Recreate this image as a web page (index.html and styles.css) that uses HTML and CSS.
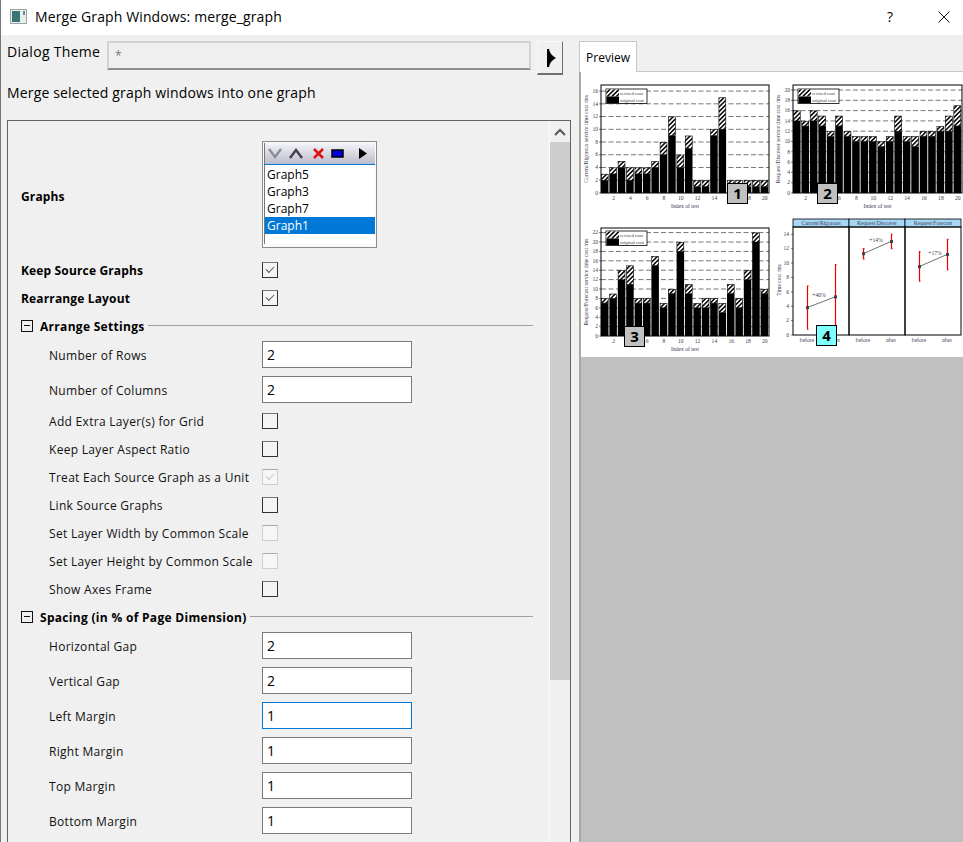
FILE: index.html
```html
<!DOCTYPE html>

<html lang="en">

	<head>
		<title>Merge Graph Windows</title>
		<link rel="stylesheet" href="styles.css">
	</head>

	<body>

		<div class="window">

			<header class="titlebar">
				<svg class="app-icon" width="17" height="15" viewBox="0 0 17 15">
					<rect x="0.5" y="0.5" width="16" height="14" fill="#e8eeee" stroke="#9aa6a6" />
					<rect x="2" y="2" width="8" height="11" fill="#3a7476" />
					<rect x="13" y="2" width="2" height="4" fill="#6a8a8c" />
				</svg>
				<span class="title-text">Merge Graph Windows: merge_graph</span>
				<span class="help">?</span>
				<svg class="close" width="12" height="12" viewBox="0 0 12 12">
					<path d="M0.5 0.5 L11.5 11.5 M11.5 0.5 L0.5 11.5" stroke="#111" fill="none" />
				</svg>
			</header>

			<main class="dialog">

				<section class="left">

					<div class="theme-row">
						<div class="theme-label">Dialog Theme</div>
						<div class="theme-field">*</div>
						<div class="theme-button">
							<svg width="9" height="18" viewBox="0 0 9 18">
								<path d="M0 0 L2 0 Q3 6 9 9 Q3 12 2 18 L0 18 Z" fill="#000" />
							</svg>
						</div>
					</div>

					<p class="description">Merge selected graph windows into one graph</p>

					<div class="panel">

						<form class="settings">

							<div class="row row-graphs">
								<div class="label strong">Graphs</div>
								<div class="listbox">
									<div class="list-tools">
										<svg width="109" height="21" viewBox="0 0 109 21">
											<path d="M4 6 L10 14 L16 6" stroke="#8d8d96" stroke-width="2.5" fill="none" />
											<path d="M25 15 L31 7 L37 15" stroke="#44444a" stroke-width="2.5" fill="none" />
											<path d="M49 6 L58 15 M58 6 L49 15" stroke="#e01010" stroke-width="2.5" fill="none" />
											<rect x="67" y="7" width="11" height="7" fill="#0000e0" stroke="#000" stroke-width="1.5" />
											<path d="M94 5 L102 10.5 L94 16 Z" fill="#000" />
										</svg>
									</div>
									<div class="list-body">
										<div class="list-item">Graph5</div>
										<div class="list-item">Graph3</div>
										<div class="list-item">Graph7</div>
										<div class="list-item selected">Graph1</div>
									</div>
								</div>
							</div>

							<div class="row row-check">
								<div class="label strong">Keep Source Graphs</div>
								<div class="check on"></div>
							</div>
							<div class="row row-check">
								<div class="label strong">Rearrange Layout</div>
								<div class="check on"></div>
							</div>

							<div class="group"><span class="toggle"></span><span class="group-title">Arrange Settings</span><span class="group-line"></span></div>

							<div class="row row-input">
								<div class="label sub">Number of Rows</div>
								<div class="input">2</div>
							</div>
							<div class="row row-input">
								<div class="label sub">Number of Columns</div>
								<div class="input">2</div>
							</div>
							<div class="row row-check">
								<div class="label sub">Add Extra Layer(s) for Grid</div>
								<div class="check"></div>
							</div>
							<div class="row row-check">
								<div class="label sub">Keep Layer Aspect Ratio</div>
								<div class="check"></div>
							</div>
							<div class="row row-check">
								<div class="label sub">Treat Each Source Graph as a Unit</div>
								<div class="check on disabled"></div>
							</div>
							<div class="row row-check">
								<div class="label sub">Link Source Graphs</div>
								<div class="check"></div>
							</div>
							<div class="row row-check">
								<div class="label sub">Set Layer Width by Common Scale</div>
								<div class="check disabled"></div>
							</div>
							<div class="row row-check">
								<div class="label sub">Set Layer Height by Common Scale</div>
								<div class="check disabled"></div>
							</div>
							<div class="row row-check">
								<div class="label sub">Show Axes Frame</div>
								<div class="check"></div>
							</div>

							<div class="group"><span class="toggle"></span><span class="group-title">Spacing (in % of Page Dimension)</span><span class="group-line"></span></div>

							<div class="row row-input">
								<div class="label sub">Horizontal Gap</div>
								<div class="input">2</div>
							</div>
							<div class="row row-input">
								<div class="label sub">Vertical Gap</div>
								<div class="input">2</div>
							</div>
							<div class="row row-input">
								<div class="label sub">Left Margin</div>
								<div class="input focus">1</div>
							</div>
							<div class="row row-input">
								<div class="label sub">Right Margin</div>
								<div class="input">1</div>
							</div>
							<div class="row row-input">
								<div class="label sub">Top Margin</div>
								<div class="input">1</div>
							</div>
							<div class="row row-input">
								<div class="label sub">Bottom Margin</div>
								<div class="input">1</div>
							</div>

						</form>

						<div class="scrollbar">
							<div class="scroll-up">
								<svg width="12" height="8" viewBox="0 0 12 8">
									<path d="M1 7 L6 2 L11 7" stroke="#555" stroke-width="2" fill="none" />
								</svg>
							</div>
							<div class="scroll-thumb"></div>
						</div>

					</div>

				</section>

				<section class="right">

					<div class="tabs">
						<div class="tab">Preview</div>
					</div>

					<div class="tab-pane">
						<div class="sheet">
							<div class="thumb"><svg id="chart1" width="191" height="142"></svg><span class="badge badge-1">1</span></div>
							<div class="thumb"><svg id="chart2" width="191" height="142"></svg><span class="badge badge-2">2</span></div>
							<div class="thumb"><svg id="chart3" width="191" height="143"></svg><span class="badge badge-3">3</span></div>
							<div class="thumb"><svg id="chart4" width="191" height="143"></svg><span class="badge badge-4">4</span></div>
						</div>
					</div>

				</section>

			</main>

		</div>

		<script src="charts.js"></script>

	</body>

</html>
```

FILE: styles.css
```css
html, body { margin:0; padding:0; height:100%; overflow:hidden; }
body { font-family:"Open Sans", "Noto Sans", sans-serif; font-size:14px; color:#000; background-color:#f0f0f0; }

.window { height:842px; display:flex; flex-direction:column; border-left:1px solid #777; box-sizing:border-box; overflow:hidden; }

.titlebar { height:35px; flex:none; background-color:#fff; display:flex; align-items:center; padding:0 12px 2px 9px; box-sizing:border-box; }
.app-icon { flex:none; margin-right:8px; }
.title-text { font-size:14px; flex:1; letter-spacing:0.12px; }
.help { font-size:14px; margin-right:45px; }
.close { flex:none; margin-right:1px; }

.dialog { flex:1; min-height:0; display:grid; grid-template-columns:570px 1fr; }

.left { min-width:0; }

.theme-row { display:flex; align-items:flex-start; padding:6px 0 0 6px; height:50px; box-sizing:border-box; }
.theme-label { width:100px; flex:none; line-height:22px; letter-spacing:0.3px; white-space:nowrap; }
.theme-field { width:424px; height:29px; flex:none; box-sizing:border-box; border:2px solid #d2d2d2; border-bottom:2px solid #8c8c8c; padding:4px 6px; color:#777; font-size:12px; background-color:#efefef; }
.theme-button { width:26px; height:34px; flex:none; margin-left:6px; box-sizing:border-box; border:1px solid #f8f8f8; border-right:1px solid #707070; border-bottom:2px solid #707070; display:flex; align-items:center; justify-content:center; padding-left:3px; }

.description { margin:0 0 0 6px; height:35px; line-height:15px; letter-spacing:0.16px; }

.panel { margin-left:6px; width:564px; height:730px; box-sizing:border-box; border:1px solid #646464; display:grid; grid-template-columns:1fr 21px; }

.settings { min-width:0; }

.row { display:grid; grid-template-columns:254px 1fr; align-items:center; }
.row-graphs { padding:20px 0 8px; }
.row-graphs .label { padding-top:4px; }
.row-check { height:28px; }
.row-input { height:35px; }
.row-input .label { padding-top:2px; }

.label { white-space:nowrap; font-size:12px; }
.strong { font-weight:700; padding-left:13px; letter-spacing:0.15px; }
.sub { padding-left:41px; color:#111; letter-spacing:0.3px; }

.check { width:16px; height:16px; box-sizing:border-box; border:1px solid #333; background-color:#f4f4f4; border-top-color:#777; position:relative; }
.check.on::after { content:""; position:absolute; left:3px; top:1px; width:7px; height:4px; margin-top:2px; border-left:1.5px solid #555; border-bottom:1.5px solid #555; transform:rotate(-45deg) scale(1, 0.9); }
.check.disabled { border-color:#cfcfcf; border-top-color:#aaa; background-color:#f6f6f6; }
.check.disabled::after { border-color:#c4c4c4; }

.group { height:25px; box-sizing:border-box; padding:3px 0 0 13px; display:flex; align-items:center; }
.toggle { width:12px; height:12px; box-sizing:border-box; border:1px solid #111; position:relative; flex:none; margin-right:7px; }
.toggle::after { content:""; position:absolute; left:2px; right:2px; top:4px; height:1px; background-color:#111; }
.group-title { font-size:12px; font-weight:700; white-space:nowrap; letter-spacing:0.3px; }
.group-line { flex:1; height:1px; margin:0 16px 2px 3px; background-color:#a0a0a0; }

.input { width:150px; height:27px; box-sizing:border-box; background-color:#fff; border:1px solid #7a7a7a; padding:0 4px; line-height:25px; font-size:14px; }
.input.focus { border-color:#0078d7; }

.listbox { width:115px; height:107px; box-sizing:border-box; border:1px solid #8c8c8c; padding:1px; background-color:#fafafa; display:flex; flex-direction:column; }
.list-tools { height:21px; flex:none; border:1px solid #777; border-width:0 0 0 1px; background:linear-gradient(#f4f4fa, #bcbccc); border-bottom:1px solid #0078d7; }
.list-tools svg { display:block; }
.list-body { flex:1; background-color:#fff; border-left:1px solid #777; padding-top:1px; margin-bottom:2px; }
.list-item { font-size:12px; height:17px; line-height:17px; padding-left:2px; }
.list-item.selected { background-color:#0078d7; color:#fff; }

.scrollbar { background-color:#f0f0f0; border-left:1px solid #fafafa; }
.scroll-up { height:21px; display:flex; align-items:center; justify-content:center; }
.scroll-up svg { display:block; }
.scroll-thumb { height:538px; background-color:#cdcdcd; }

.right { min-width:0; padding:6px 0 0 8px; }

.tabs { display:flex; height:30px; }
.tab { width:58px; height:31px; box-sizing:border-box; border:1px solid #c8c8c8; border-bottom:0; background-color:#fff; font-size:12px; line-height:31px; text-align:center; position:relative; z-index:1; }

.tab-pane { height:772px; box-sizing:border-box; border-left:2px solid #a8a8a8; border-top:1px solid #c8c8c8; background-color:#c0c0c0; }

.sheet { display:grid; grid-template-columns:191px 191px; background-color:#fff; }
.thumb { position:relative; }
.thumb svg { display:block; }
.thumb text { font-family:"Liberation Serif", serif; font-size:5.6px; fill:#3c3c55; }
.thumb text.legend { font-size:4.8px; }

.badge { position:absolute; width:21px; height:21px; box-sizing:border-box; border:1px solid #000; background-color:#c0c0c0; font-family:"Open Sans", sans-serif; font-weight:700; font-size:15px; line-height:19px; text-align:center; }
.badge-1 { left:146px; top:111px; }
.badge-2 { left:45px; top:111px; }
.badge-3 { left:43px; top:112px; }
.badge-4 { left:44px; top:111px; background-color:#80ffff; }
```

FILE: charts.js
```js
const bars = (id, d) => {

	let s = '<defs><pattern id="' + id + 'h" width="3.2" height="3.2" patternUnits="userSpaceOnUse" patternTransform="rotate(45)"><rect width="3.2" height="3.2" fill="#fff" /><rect width="1.5" height="3.2" fill="#000" /></pattern></defs>';

	const x0 = d.x, x1 = d.x + d.w, top = d.y, base = d.y + d.h;
	const unit = d.unit, pitch = d.w / 20;
	const yOf = $v => base - $v * unit;

	// dashed grid lines
	for (let v = 2; v <= d.max; v += 2) {
		s += '<line x1="' + x0 + '" x2="' + x1 + '" y1="' + yOf(v) + '" y2="' + yOf(v) + '" stroke="#777" stroke-dasharray="5 2.5" stroke-width="1" />';
	}

	d.data.forEach(($v, $i) => {
		const x = x0 + $i * pitch;
		s += '<rect x="' + x + '" y="' + yOf($v[0]) + '" width="' + (pitch - 0.9) + '" height="' + ($v[0] * unit) + '" fill="#000" />';
		s += '<rect x="' + (x + 0.3) + '" y="' + (yOf($v[1]) + 0.3) + '" width="' + (pitch - 1.5) + '" height="' + (($v[1] - $v[0]) * unit - 0.3) + '" fill="url(#' + id + 'h)" stroke="#000" stroke-width="0.6" />';
	});

	s += '<rect x="' + x0 + '" y="' + top + '" width="' + d.w + '" height="' + d.h + '" fill="none" stroke="#000" stroke-width="1" />';

	// axis labels
	for (let v = 0; v <= d.max; v += 2) {
		s += '<line x1="' + (x0 - 2) + '" x2="' + x0 + '" y1="' + yOf(v) + '" y2="' + yOf(v) + '" stroke="#000" stroke-width="0.5" />';
		s += '<text x="' + (x0 - 3) + '" y="' + (yOf(v) + 1.7) + '" text-anchor="end">' + v + '</text>';
	}
	for (let n = 2; n <= 20; n += 2) {
		s += '<text x="' + (x0 + (n - 0.5) * pitch) + '" y="' + (base + 7) + '" text-anchor="middle">' + n + '</text>';
	}
	s += '<text x="' + (x0 + d.w / 2) + '" y="' + (base + 15) + '" text-anchor="middle">Index of test</text>';
	s += '<text transform="translate(' + (x0 - 13) + ' ' + (top + d.h / 2) + ') rotate(-90)" text-anchor="middle">' + d.title + '</text>';

	// legend
	const lx = x0 + d.lx, ly = top + d.ly;
	s += '<rect x="' + lx + '" y="' + ly + '" width="41" height="14.5" fill="#fff" stroke="#000" stroke-width="0.8" />';
	s += '<rect x="' + (lx + 0.5) + '" y="' + (ly + 0.5) + '" width="12.5" height="7" fill="url(#' + id + 'h)" />';
	s += '<rect x="' + (lx + 0.5) + '" y="' + (ly + 7.5) + '" width="12.5" height="6.5" fill="#000" />';
	s += '<text class="legend" x="' + (lx + 14) + '" y="' + (ly + 5.5) + '">revised cost</text>';
	s += '<text class="legend" x="' + (lx + 14) + '" y="' + (ly + 12.5) + '">original cost</text>';

	document.getElementById(id).innerHTML = s;

};

bars("chart1", {
	x:20, y:13, w:168, h:108, max:16, unit:6.37, lx:5, ly:4,
	title:"Current/Rigorous service time cost /ms",
	data:[[2,3],[3,4],[4,5],[2,4],[3,4],[3,4],[4,5],[6,8],[9,12],[4,6],[7,9],[1,2],[1,2],[9,10],[10,15],[1,2],[1,2],[1,2],[1,2],[1,2]]
});

bars("chart2", {
	x:21, y:13, w:169, h:108, max:20, unit:5.15, lx:5, ly:4,
	title:"Request/Discover service time cost /ms",
	data:[[14,16],[13,14],[14,16],[13,15],[11,12],[13,15],[11,12],[10,11],[10,11],[10,11],[9,10],[10,11],[12,15],[10,11],[9,11],[11,12],[11,12],[12,13],[12,15],[13,17]]
});

bars("chart3", {
	x:20, y:14, w:168, h:108, max:22, unit:4.7, lx:5, ly:3,
	title:"Request/Forecast service time cost /ms",
	data:[[7,8],[8,9],[12,14],[11,15],[7,8],[7,8],[15,17],[6,7],[9,10],[18,20],[9,11],[6,7],[6,8],[7,8],[5,7],[9,11],[6,8],[12,14],[20,22],[9,10]]
});

const trend = () => {

	const x0 = 21, base = 121, unit = 7.19;
	const yOf = $v => base - $v * unit;
	const names = ["Current/Rigorous", "Request/Discover", "Request/Forecast"];
	const panels = [
		{ x:[35, 63], m:[3.8, 5.3], low:[0.8, 1.2], high:[6.8, 9.8], pct:"+40%", px:47, pv:5.5 },
		{ x:[91, 119], m:[11.3, 13], low:[10.6, 12], high:[12, 14], pct:"+14%", px:104, pv:13.1 },
		{ x:[147, 175], m:[9.5, 11.2], low:[7.5, 9.1], high:[11.6, 13.3], pct:"+17%", px:163, pv:11.3 }
	];

	let s = "";

	// y axis
	for (let v = 0; v <= 14; v += 2) {
		s += '<line x1="' + (x0 - 2) + '" x2="' + x0 + '" y1="' + yOf(v) + '" y2="' + yOf(v) + '" stroke="#000" stroke-width="0.5" />';
		s += '<text x="' + (x0 - 4) + '" y="' + (yOf(v) + 1.7) + '" text-anchor="end">' + v + '</text>';
	}
	s += '<text transform="translate(9 66) rotate(-90)" text-anchor="middle">Time cost /ms</text>';

	panels.forEach(($p, $i) => {

		const left = x0 + $i * 56;

		s += '<rect x="' + left + '" y="5" width="56" height="8" fill="#a6d8f6" stroke="#000" stroke-width="0.8" />';
		s += '<text x="' + (left + 28) + '" y="11" text-anchor="middle">' + names[$i] + '</text>';
		s += '<rect x="' + left + '" y="13" width="56" height="108" fill="none" stroke="#000" stroke-width="1" />';

		$p.x.forEach(($x, $j) => {
			const lo = yOf($p.low[$j]), hi = yOf($p.high[$j]);
			s += '<path d="M' + ($x + 1.5) + ' ' + hi + ' H' + ($x + 0.5) + ' V' + lo + ' H' + ($x + 1.5) + '" stroke="#f00000" stroke-width="1.2" fill="none" />';
			s += '<rect x="' + ($x - 1) + '" y="' + (yOf($p.m[$j]) - 1.5) + '" width="3" height="3" fill="#444" />';
			s += '<text x="' + $x + '" y="' + (base + 7) + '" text-anchor="middle">' + ($j === 0 ? "before" : "after") + '</text>';
		});

		s += '<line x1="' + $p.x[0] + '" x2="' + $p.x[1] + '" y1="' + yOf($p.m[0]) + '" y2="' + yOf($p.m[1]) + '" stroke="#333" stroke-width="0.7" />';
		s += '<text x="' + $p.px + '" y="' + (yOf($p.pv) + 1.5) + '" text-anchor="middle">' + $p.pct + '</text>';

	});

	document.getElementById("chart4").innerHTML = s;

};

trend();
```
